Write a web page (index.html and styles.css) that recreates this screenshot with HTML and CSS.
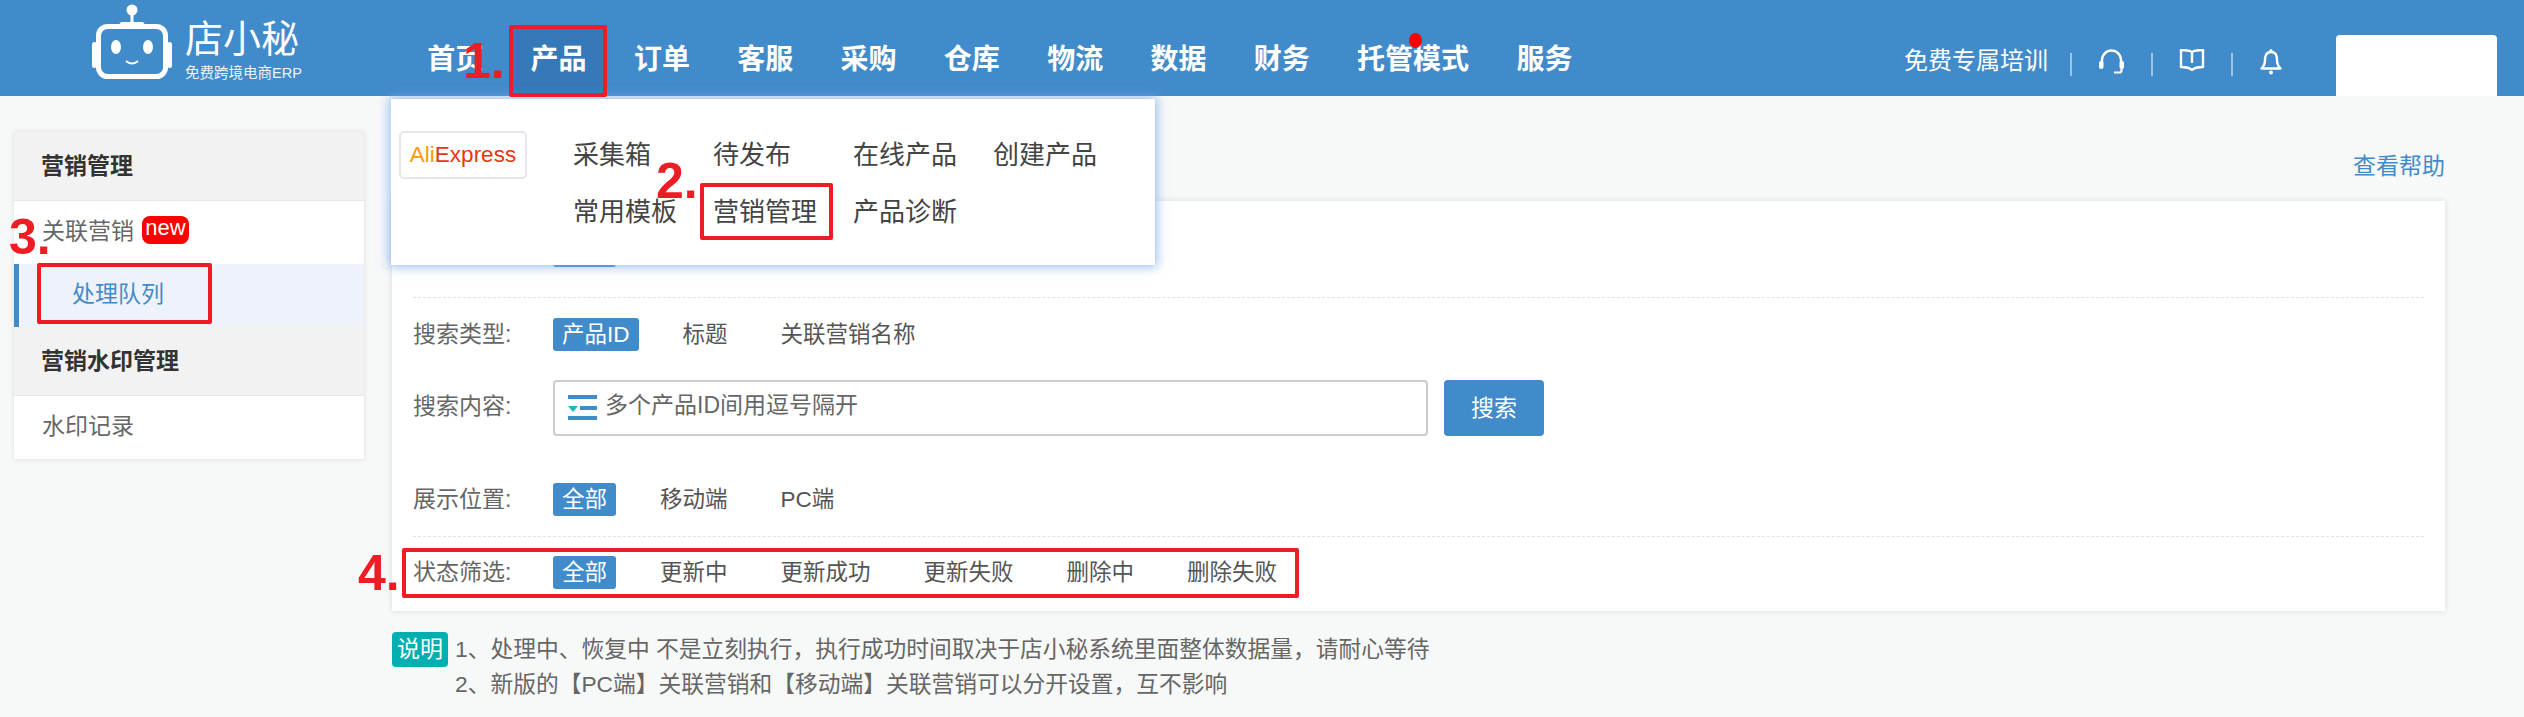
FILE: index.html
```html
<!DOCTYPE html>
<html lang="zh-CN">
<head>
<meta charset="utf-8">
<title>店小秘</title>
<link rel="stylesheet" href="styles.css">
</head>
<body>
<header class="topbar">
  <a class="logo">
    <svg class="logo-robot" width="86" height="78" viewBox="0 0 86 78">
      <circle cx="42" cy="6" r="5.5" fill="#fff"/>
      <path d="M42 8V20" stroke="#fff" stroke-width="3"/>
      <path d="M28 22L31 18H53L56 22Z" fill="#fff"/>
      <rect x="8.5" y="22.5" width="67" height="50" rx="9" fill="none" stroke="#fff" stroke-width="5"/>
      <rect x="2" y="38" width="5" height="26" rx="2.5" fill="#fff"/>
      <rect x="77" y="38" width="5" height="26" rx="2.5" fill="#fff"/>
      <ellipse cx="26" cy="43" rx="5" ry="7" fill="#fff"/>
      <ellipse cx="58" cy="43" rx="5" ry="7" fill="#fff"/>
      <path d="M36 57Q42 62 48 57" fill="none" stroke="#fff" stroke-width="2"/>
    </svg>
    <span class="logo-text">
      <span class="logo-name">店小秘</span>
      <span class="logo-sub">免费跨境电商ERP</span>
    </span>
  </a>
  <nav class="nav">
    <a class="nav-item">首页</a>
    <a class="nav-item nav-item-active">产品</a>
    <a class="nav-item">订单</a>
    <a class="nav-item">客服</a>
    <a class="nav-item">采购</a>
    <a class="nav-item">仓库</a>
    <a class="nav-item">物流</a>
    <a class="nav-item">数据</a>
    <a class="nav-item">财务</a>
    <a class="nav-item nav-item-dot">托管模式</a>
    <a class="nav-item">服务</a>
  </nav>
  <div class="tools">
    <span class="tools-link">免费专属培训</span>
    <span class="tools-sep"></span>
    <svg class="tool-icon" width="27" height="25" viewBox="0 0 27 25">
      <path d="M4 14V11a9.5 9.5 0 0 1 19 0V14" fill="none" stroke="#fff" stroke-width="2.4"/>
      <rect x="1" y="12" width="4.5" height="8" rx="2" fill="#fff"/>
      <rect x="21.5" y="12" width="4.5" height="8" rx="2" fill="#fff"/>
      <path d="M23.5 20v1.5a2 2 0 0 1-2 2H16" fill="none" stroke="#fff" stroke-width="2.2"/>
    </svg>
    <span class="tools-sep"></span>
    <svg class="tool-icon" width="26" height="23" viewBox="0 0 26 23">
      <path d="M13 3C10 1 5 1 2 1V18C5 18 10 18 13 21C16 18 21 18 24 18V1C21 1 16 1 13 3ZM13 3V14" fill="none" stroke="#fff" stroke-width="2.4" stroke-linejoin="round"/>
    </svg>
    <span class="tools-sep"></span>
    <svg class="tool-icon" width="24" height="26" viewBox="0 0 24 26">
      <path d="M12 3C7 3 6 7 6 11C6 15 5 17 2.5 19.5H21.5C19 17 18 15 18 11C18 7 17 3 12 3Z" fill="none" stroke="#fff" stroke-width="2.4" stroke-linejoin="round"/>
      <rect x="10.5" y="0" width="3" height="4" rx="1.5" fill="#fff"/>
      <circle cx="12" cy="23.5" r="2" fill="#fff"/>
    </svg>
    <div class="account"></div>
  </div>
</header>

<div class="page">
  <aside class="sidebar">
    <div class="side-title">营销管理</div>
    <div class="side-item">关联营销<span class="badge-new">new</span></div>
    <div class="side-item side-item-active">处理队列</div>
    <div class="side-title">营销水印管理</div>
    <div class="side-item">水印记录</div>
  </aside>

  <main class="main">
    <div class="help-row"><a class="help-link">查看帮助</a></div>
    <section class="card">
      <div class="filter filter-top">
        <span class="filter-label"></span>
        <span class="opt opt-on">全部</span>
      </div>
      <div class="filter filter-type">
        <span class="filter-label">搜索类型:</span>
        <span class="opt opt-on">产品ID</span>
        <span class="opt">标题</span>
        <span class="opt">关联营销名称</span>
      </div>
      <div class="search-row">
        <span class="filter-label">搜索内容:</span>
        <div class="search-input">
          <svg class="search-icon" width="29" height="25" viewBox="0 0 29 25">
            <rect x="0" y="0" width="29" height="4" fill="#428bca"/>
            <path d="M0 11H10L5 17Z" fill="#1fb5c4"/>
            <rect x="12" y="11" width="17" height="4" fill="#428bca"/>
            <rect x="0" y="21" width="29" height="4" fill="#428bca"/>
          </svg>
          <span class="search-hint">多个产品ID间用逗号隔开</span>
        </div>
        <button class="search-btn">搜索</button>
      </div>
      <div class="filter filter-place">
        <span class="filter-label">展示位置:</span>
        <span class="opt opt-on">全部</span>
        <span class="opt">移动端</span>
        <span class="opt">PC端</span>
      </div>
      <div class="filter filter-state">
        <span class="filter-label">状态筛选:</span>
        <span class="opt opt-on">全部</span>
        <span class="opt">更新中</span>
        <span class="opt">更新成功</span>
        <span class="opt">更新失败</span>
        <span class="opt">删除中</span>
        <span class="opt">删除失败</span>
      </div>
    </section>
    <div class="notes">
      <span class="notes-tag">说明</span>
      <div class="notes-text">
        <p>1、处理中、恢复中 不是立刻执行&#xFF0C;执行成功时间取决于店小秘系统里面整体数据量&#xFF0C;请耐心等待</p>
        <p>2、新版的【PC端】关联营销和【移动端】关联营销可以分开设置&#xFF0C;互不影响</p>
      </div>
    </div>
  </main>
</div>

<div class="dropdown">
  <div class="platform"><span class="ali-a">Ali</span><span class="ali-b">Express</span></div>
  <div class="menu-grid">
    <a>采集箱</a><a>待发布</a><a>在线产品</a><a>创建产品</a>
    <a>常用模板</a><a>营销管理</a><a>产品诊断</a>
  </div>
</div>

<div class="mark mark-box-1"></div>
<div class="mark mark-box-2"></div>
<div class="mark mark-box-3"></div>
<div class="mark mark-box-4"></div>
<span class="step step-1">1.</span>
<span class="step step-2">2.</span>
<span class="step step-3">3.</span>
<span class="step step-4">4.</span>
</body>
</html>
```
FILE: styles.css
```css
* { box-sizing: border-box; }
html, body { margin: 0; padding: 0; }
body {
  position: relative;
  height: 717px;
  overflow: hidden;
  background: #f7f8f8;
  color: #666;
  font-family: "Liberation Sans", "Noto Sans CJK SC", sans-serif;
  font-size: 23px;
  line-height: 33px;
}
p { margin: 0; }

/* top bar */
.topbar {
  display: flex;
  align-items: stretch;
  height: 96px;
  padding-left: 90px;
  background: #428bca;
  color: #fff;
}
.logo { display: flex; width: 319px; flex: none; padding-top: 4px; }
.logo-robot { flex: none; }
.logo-text { display: flex; flex-direction: column; margin: 12px 0 0 9px; }
.logo-name { font-size: 38px; line-height: 46px; }
.logo-sub { font-size: 14.5px; line-height: 18px; white-space: nowrap; opacity: .9; margin-top: 2px; }

.nav { display: flex; gap: 10.8px; padding-top: 29px; }
.nav-item {
  position: relative;
  height: 67px;
  padding: 0 18.25px;
  font-size: 28px;
  font-weight: 700;
  line-height: 62px;
  white-space: nowrap;
}
.nav-item-active { background: #3579b8; }
.nav-item-dot::after {
  content: "";
  position: absolute;
  left: 70px;
  top: 4px;
  width: 13px;
  height: 15px;
  border-radius: 50%;
  background: #f00;
}

.tools { display: flex; align-items: flex-start; margin-left: auto; padding-right: 27px; }
.tools-link { font-size: 24px; line-height: 34px; margin: 44px -4px 0 0; }
.tools-sep { width: 2px; height: 23px; margin: 53px 26px 0; background: rgba(255,255,255,.5); }
.tool-icon { margin-top: 49px; flex: none; }
.account {
  width: 161px;
  height: 61px;
  margin: 35px 0 0 53px;
  border-radius: 4px 4px 0 0;
  background: #fff;
}

/* page */
.page { display: flex; align-items: flex-start; padding-left: 14px; }

.sidebar {
  width: 350px;
  flex: none;
  margin-top: 36px;
  background: #fff;
  box-shadow: 0 0 5px rgba(0,0,0,.12);
}
.side-title {
  height: 69px;
  padding-left: 27px;
  background: #f2f2f2;
  border-bottom: 1px solid #e8e8e8;
  color: #333;
  font-weight: 700;
  line-height: 68px;
}
.side-item {
  display: flex;
  align-items: center;
  height: 63px;
  padding: 0 0 3px 28px;
  color: #666;
}
.badge-new {
  width: 47px;
  height: 28px;
  margin: -2px 0 0 8px;
  border-radius: 8px;
  background: #f00;
  color: #fff;
  font-size: 22px;
  line-height: 24px;
  text-align: center;
}
.side-item-active {
  padding-left: 53px;
  border-left: 5px solid #428bca;
  background: #eef2fb;
  color: #428bca;
}

.main { width: 2053px; flex: none; margin-left: 28px; }
.help-row { display: flex; justify-content: flex-end; height: 105px; padding-top: 55px; }
.help-link { color: #428bca; line-height: 30px; }

.card {
  padding: 33px 21px 22px;
  background: #fff;
  box-shadow: 0 0 6px rgba(0,0,0,.12);
}
.filter { display: flex; align-items: center; gap: 35px; }
.filter-label { flex: none; width: 105px; color: #666; white-space: nowrap; }
.filter-top { padding-bottom: 31px; border-bottom: 1px dashed #e2e2e2; height: 64px; }
.filter-type { margin-top: 20px; }
.filter-place { margin-top: 47px; padding-bottom: 20px; border-bottom: 1px dashed #e2e2e2; }
.filter-state { margin-top: 19px; }
.opt {
  height: 33px;
  padding: 0 9px;
  border-radius: 3px;
  color: #555;
  font-size: 22.5px;
  line-height: 33px;
  white-space: nowrap;
}
.opt-on { background: #428bca; color: #fff; }

.search-row { display: flex; align-items: flex-start; margin-top: 29px; }
.search-row .filter-label { width: 140px; line-height: 52px; }
.search-input {
  display: flex;
  align-items: flex-start;
  width: 875px;
  height: 56px;
  padding: 13px 0 0 13px;
  border: 2px solid #ccc;
  border-radius: 4px;
}
.search-icon { flex: none; }
.search-hint { margin: -5px 0 0 8px; color: #666; line-height: 30px; }
.search-btn {
  width: 100px;
  height: 56px;
  margin-left: 16px;
  padding: 0;
  border: 0;
  border-radius: 4px;
  background: #428bca;
  color: #fff;
  font: inherit;
}

.notes { display: flex; gap: 7px; margin-top: 21px; }
.notes-tag {
  flex: none;
  width: 56px;
  height: 35px;
  border-radius: 4px;
  background: #00b0b0;
  color: #fff;
  line-height: 35px;
  text-align: center;
}
.notes-text { font-size: 22.75px; line-height: 35px; color: #666; }

/* dropdown over the page */
.dropdown {
  position: absolute;
  left: 391px;
  top: 99px;
  display: flex;
  align-items: flex-start;
  width: 764px;
  height: 166px;
  padding: 32px 0 0 8px;
  background: #fff;
  box-shadow: 0 0 10px 2px rgba(120,170,240,.75);
}
.platform {
  width: 128px;
  height: 48px;
  border: 2px solid #e3e7ec;
  border-radius: 5px;
  font-size: 22.5px;
  line-height: 44px;
  text-align: center;
}
.ali-a { color: #ff9900; }
.ali-b { color: #e8380d; }
.menu-grid {
  display: grid;
  grid-template-columns: repeat(4, 140px);
  grid-auto-rows: 57px;
  margin: -4px 0 0 46px;
  font-size: 26px;
  line-height: 57px;
  color: #444;
}

/* red annotations */
.mark {
  position: absolute;
  border: 4px solid #ee1c25;
  border-radius: 2px;
}
.mark-box-1 { left: 509px; top: 25px; width: 98px; height: 72px; }
.mark-box-2 { left: 700px; top: 183px; width: 133px; height: 57px; }
.mark-box-3 { left: 37px; top: 263px; width: 175px; height: 61px; }
.mark-box-4 { left: 402px; top: 548px; width: 897px; height: 50px; }
.step {
  position: absolute;
  color: #ee1c25;
  font-size: 50px;
  font-weight: 700;
  line-height: 50px;
}
.step-1 { left: 463px; top: 36px; }
.step-2 { left: 656px; top: 156px; }
.step-3 { left: 9px; top: 212px; }
.step-4 { left: 358px; top: 548px; }
```
